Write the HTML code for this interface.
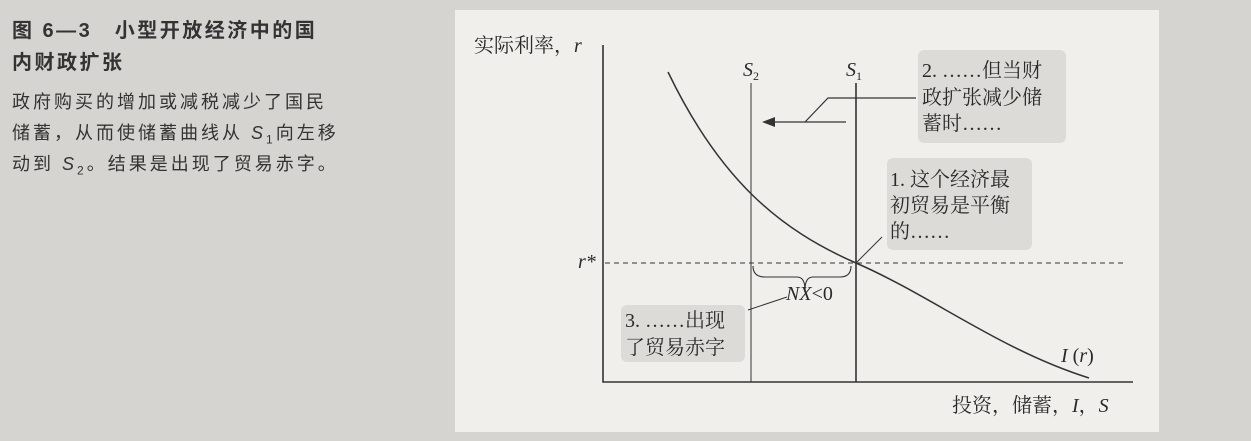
<!DOCTYPE html><html><head><meta charset="utf-8"><style>
body{margin:0;width:1251px;height:441px;background:#d6d4d0;position:relative;overflow:hidden;font-family:"Liberation Serif","Noto Serif CJK SC",serif;color:#2a2a2a}
.t{position:absolute;white-space:nowrap}
.h{font-family:"Liberation Sans","Noto Sans CJK SC",sans-serif;font-weight:bold;font-size:20px;color:#333;letter-spacing:2.5px}
.b{font-family:"Liberation Sans","Noto Sans CJK SC",sans-serif;font-size:18px;color:#333;letter-spacing:3px}
</style></head><body>
<div class="t h" style="left:12px;top:14px">图 6—3　小型开放经济中的国</div>
<div class="t h" style="left:12px;top:46px">内财政扩张</div>
<div class="t b" style="left:12px;top:88px">政府购买的增加或减税减少了国民</div>
<div class="t b" style="left:12px;top:119px">储蓄，从而使储蓄曲线从 <i>S</i><sub style="font-size:12px">1</sub>向左移</div>
<div class="t b" style="left:12px;top:150px">动到 <i>S</i><sub style="font-size:12px">2</sub>。结果是出现了贸易赤字。</div>
<div style="position:absolute;left:455px;top:10px;width:704px;height:422px;background:#f1efec"></div>
<div style="position:absolute;left:918px;top:50px;width:148px;height:93px;background:#dddbd7;border-radius:6px"></div>
<div style="position:absolute;left:887px;top:158px;width:145px;height:92px;background:#dddbd7;border-radius:6px"></div>
<div style="position:absolute;left:621px;top:305px;width:124px;height:57px;background:#dddbd7;border-radius:6px"></div>
<svg width="1251" height="441" style="position:absolute;left:0;top:0" font-family="Liberation Serif,Noto Serif CJK SC,serif">
<g stroke="#333" fill="none">
<path d="M603 45V382H1133" stroke-width="1.6"/>
<path d="M751 83V382" stroke-width="1"/>
<path d="M856 83V382" stroke-width="1.6"/>
<path d="M605 263H1125" stroke-dasharray="5 4" stroke-width="1"/>
<path d="M668 72C720 180 780 230 856 263S1000 350 1089 378" stroke-width="1.5"/>
<path d="M846 122H768" stroke-width="1.3"/>
<path d="M775 117L762 122L775 127" fill="#333" stroke="none"/>
<path d="M805 122L828 98H916" stroke-width="1.2"/>
<path d="M882 237L856 263" stroke-width="1"/>
<path d="M753 266Q753 277 765 277H797Q805 277 805 290Q805 277 813 277H840Q851 277 851 266" stroke-width="1.1"/>
<path d="M787 297L748 310" stroke-width="1"/>
</g>
<g fill="#2a2a2a" font-size="20">
<text x="474" y="52">实际利率，<tspan font-style="italic">r</tspan></text>
<text x="743" y="76" font-style="italic">S<tspan font-size="12" dy="4" font-style="normal">2</tspan></text>
<text x="846" y="76" font-style="italic">S<tspan font-size="12" dy="4" font-style="normal">1</tspan></text>
<text x="922" y="77">2. ……但当财</text>
<text x="922" y="104">政扩张减少储</text>
<text x="922" y="130">蓄时……</text>
<text x="890" y="186">1. 这个经济最</text>
<text x="890" y="212">初贸易是平衡</text>
<text x="890" y="238">的……</text>
<text x="578" y="268" font-style="italic">r*</text>
<text x="786" y="300" font-style="italic">NX<tspan font-style="normal">&lt;0</tspan></text>
<text x="625" y="327">3. ……出现</text>
<text x="625" y="354">了贸易赤字</text>
<text x="1061" y="362" font-style="italic">I<tspan font-style="normal"> (</tspan>r<tspan font-style="normal">)</tspan></text>
<text x="952" y="412">投资，储蓄，<tspan font-style="italic">I</tspan>，<tspan font-style="italic">S</tspan></text>
</g>
</svg>
</body></html>
